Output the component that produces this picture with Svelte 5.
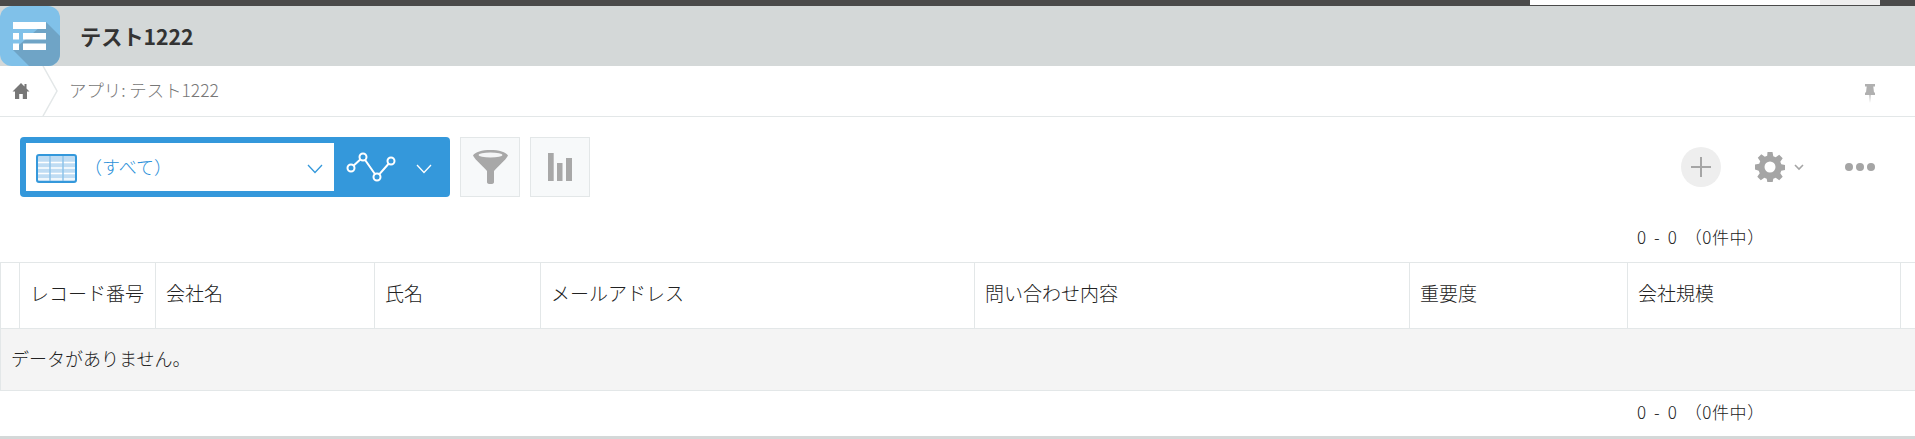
<script>
  const columns = [
    { label: 'レコード番号', width: 136 },
    { label: '会社名', width: 219 },
    { label: '氏名', width: 166 },
    { label: 'メールアドレス', width: 434 },
    { label: '問い合わせ内容', width: 435 },
    { label: '重要度', width: 218 },
    { label: '会社規模', width: 273 }
  ];
</script>

<div class="page">
  <div class="topbar">
    <div class="search"></div>
    <div class="user"></div>
  </div>

  <header class="app-header">
    <div class="app-icon">
      <svg viewBox="0 0 60 60" width="60" height="60">
        <path d="M46 16 60 30V60H29L13 44z" fill="#6fa4c6" />
        <rect x="13" y="16" width="33" height="7" fill="#fff" />
        <rect x="13" y="27" width="6" height="6.500" fill="#fff" />
        <rect x="23" y="27" width="23" height="6.500" fill="#fff" />
        <rect x="13" y="37.500" width="6" height="6.500" fill="#fff" />
        <rect x="23" y="37.500" width="23" height="6.500" fill="#fff" />
      </svg>
    </div>
    <h1>テスト1222</h1>
  </header>

  <nav class="crumbs">
    <a class="home" href="#home" aria-label="home">
      <svg viewBox="0 0 18 18" width="18" height="18">
        <path d="M9 1 0.5 9.500H3V17h4.200v-5h3.600v5H15V9.500h2.500L14.500 6.500V2h-2v2.500z" fill="#777" />
      </svg>
    </a>
    <svg class="chevron" viewBox="0 0 18 50" width="18" height="50">
      <path d="M1 0 15 25 1 50" fill="none" stroke="#e3e7e8" stroke-width="1.500" />
    </svg>
    <span class="crumb-text">アプリ: テスト1222</span>
    <svg class="pin" viewBox="0 0 10 20" width="10" height="20">
      <path d="M0 1h10v2.500H8.300l.7 6h1v2.500H5.600L5 20l-.6-8H0V9.500h1l.7-6H0z" fill="#b0b0b0" />
    </svg>
  </nav>

  <section class="toolbar">
    <div class="view-select">
      <div class="view-box">
        <svg class="table-icon" viewBox="0 0 41 29" width="41" height="29">
          <rect x="1" y="1" width="39" height="27" rx="2" fill="#bfdcf3" stroke="#3498db" stroke-width="2" />
          <path d="M2 8.500h37M2 14h37M2 19.500h37M2 25h37" stroke="#fff" stroke-width="1.600" />
          <path d="M14 2v25M27 2v25" stroke="#8fc3ea" stroke-width="1.500" />
        </svg>
        <span class="view-name">（すべて）</span>
        <svg class="caret" viewBox="0 0 16 10" width="16" height="10">
          <path d="M1 1 8 8.500 15 1" fill="none" stroke="#3498db" stroke-width="1.300" />
        </svg>
      </div>
      <svg class="graph-icon" viewBox="0 0 50 30" width="50" height="30">
        <path d="M5 16 17 5 31 25 45 9" fill="none" stroke="#fff" stroke-width="2" />
        <circle cx="5" cy="16" r="3.500" fill="#3498db" stroke="#fff" stroke-width="2" />
        <circle cx="17" cy="5" r="3.500" fill="#3498db" stroke="#fff" stroke-width="2" />
        <circle cx="31" cy="25" r="3.500" fill="#3498db" stroke="#fff" stroke-width="2" />
        <circle cx="45" cy="9" r="3.500" fill="#3498db" stroke="#fff" stroke-width="2" />
      </svg>
      <svg class="caret light" viewBox="0 0 16 10" width="16" height="10">
        <path d="M1 1 8 8.500 15 1" fill="none" stroke="#fff" stroke-width="1.300" />
      </svg>
    </div>

    <button class="tool" aria-label="filter">
      <svg viewBox="0 0 35 34" width="35" height="34">
        <path d="M0 5.500C2 10 12 18 14 21v11c0 1.500 1 2 3.500 2s3.500-.5 3.500-2V21C23 18 33 10 35 5.500 33 2 26 0 17.500 0S2 2 0 5.500z" fill="#a8a8a8" />
        <ellipse cx="17.500" cy="5" rx="12" ry="2.500" fill="#f4f5f6" />
      </svg>
    </button>
    <button class="tool" aria-label="graph">
      <svg viewBox="0 0 24 28" width="24" height="28">
        <path d="M0 0h5.700v28H0zM9 10h5.500v18H9zM18 5h6v23h-6z" fill="#a8a8a8" />
      </svg>
    </button>

    <div class="actions">
      <button class="add" aria-label="add">
        <svg viewBox="0 0 20 20" width="20" height="20">
          <path d="M10 0v20M0 10h20" stroke="#a5a5a5" stroke-width="2" />
        </svg>
      </button>
      <div class="gear">
        <svg viewBox="0 0 30 30" width="30" height="30">
          <path d="M12.500 0h5l.8 4.200 2.400 1 3.500-2.400 3.500 3.500-2.400 3.500 1 2.400 4.200.8v5l-4.200.8-1 2.400 2.400 3.500-3.500 3.500-3.500-2.400-2.400 1-.8 4.200h-5l-.8-4.200-2.400-1-3.500 2.400-3.500-3.500 2.400-3.500-1-2.400L0 17.500v-5l4.200-.8 1-2.400-2.400-3.500 3.500-3.500 3.500 2.400 2.400-1z M15 9.500a5.500 5.500 0 1 0 0 11 5.500 5.500 0 0 0 0-11z" fill="#a5a5a5" fill-rule="evenodd" />
        </svg>
        <svg viewBox="0 0 10 7" width="10" height="7">
          <path d="M1 1l4 4 4-4" fill="none" stroke="#a5a5a5" stroke-width="1.600" />
        </svg>
      </div>
      <div class="more"><i></i><i></i><i></i></div>
    </div>
  </section>

  <div class="pager">0 - 0 （0件中）</div>

  <table>
    <thead>
      <tr>
        <th class="gutter"></th>
        {#each columns as col}
          <th style="width: {col.width}px">{col.label}</th>
        {/each}
        <th class="tail"></th>
      </tr>
    </thead>
    <tbody>
      <tr>
        <td colspan={columns.length + 2}>データがありません。</td>
      </tr>
    </tbody>
  </table>

  <div class="pager bottom">0 - 0 （0件中）</div>
</div>

<style>
  :global(body) {
    margin: 0;
    background: #fff;
  }

  .page {
    width: 1915px;
    height: 439px;
    overflow: hidden;
    display: flex;
    flex-direction: column;
    border-bottom: 3px solid #d4d8d8;
    box-sizing: border-box;
    font-family: "Noto Sans CJK JP", "Noto Sans", sans-serif;
    font-weight: 300;
    color: #222;
  }

  .topbar {
    height: 6px;
    flex-shrink: 0;
    background: #4a4a4a;
    display: flex;
    justify-content: flex-end;
    padding-right: 35px;
  }

  .search {
    width: 290px;
    height: 5px;
    background: #fff;
  }

  .user {
    width: 60px;
    height: 5px;
    background: #eee;
  }

  .app-header {
    height: 60px;
    flex-shrink: 0;
    background: #d4d8d8;
    display: flex;
    align-items: center;
  }

  .app-icon {
    width: 60px;
    height: 60px;
    border-radius: 12px;
    overflow: hidden;
    background: #80c1e9;
  }

  .app-icon svg {
    display: block;
  }

  h1 {
    margin: 0 0 2px 20px;
    font-size: 21.200px;
    font-weight: 700;
    color: #333;
  }

  .crumbs {
    height: 50px;
    flex-shrink: 0;
    border-bottom: 1px solid #e3e7e8;
    display: flex;
    align-items: center;
  }

  .home {
    display: flex;
    margin-left: 12px;
  }

  .chevron {
    margin-left: 12px;
  }

  .crumb-text {
    margin-left: 9px;
    margin-bottom: 4px;
    font-size: 17.400px;
    color: #777;
  }

  .pin {
    margin-left: auto;
    margin-right: 40px;
    margin-top: 4px;
  }

  .toolbar {
    height: 60px;
    margin-top: 20px;
    padding-left: 20px;
    padding-right: 40px;
    flex-shrink: 0;
    display: flex;
    align-items: center;
    gap: 10px;
  }

  .view-select {
    width: 430px;
    height: 60px;
    box-sizing: border-box;
    background: #3498db;
    border-radius: 4px;
    padding: 6px 0 6px 6px;
    display: flex;
    align-items: center;
  }

  .view-box {
    width: 308px;
    height: 48px;
    background: #fff;
    display: flex;
    align-items: center;
    padding-left: 10px;
    box-sizing: border-box;
  }

  .table-icon {
    margin-top: 2px;
  }

  .view-name {
    margin-left: 7px;
    margin-bottom: 3px;
    font-size: 18px;
    color: #2b90d9;
    flex: 1;
  }

  .caret {
    margin-right: 11px;
    margin-top: 4px;
  }

  .graph-icon {
    margin-left: 12px;
    margin-right: 20px;
  }

  .caret.light {
    margin-right: 0;
  }

  .tool {
    width: 60px;
    height: 60px;
    padding: 0;
    box-sizing: border-box;
    border: 1px solid #e3e7e8;
    background: #f7f9fa;
    display: flex;
    align-items: center;
    justify-content: center;
  }

  .actions {
    margin-left: auto;
    display: flex;
    align-items: center;
  }

  .add {
    width: 40px;
    height: 40px;
    padding: 0;
    border: 0;
    border-radius: 50%;
    background: #eeeeee;
    display: flex;
    align-items: center;
    justify-content: center;
  }

  .gear {
    margin-left: 34px;
    display: flex;
    align-items: center;
    gap: 9px;
  }

  .more {
    margin-left: 41px;
    display: flex;
    gap: 3px;
  }

  .more i {
    width: 8px;
    height: 8px;
    border-radius: 50%;
    background: #a5a5a5;
  }

  .pager {
    height: 65px;
    flex-shrink: 0;
    box-sizing: border-box;
    padding-left: 1637px;
    padding-top: 28px;
    font-size: 17px;
    letter-spacing: 0.6px;
    word-spacing: 3px;
    line-height: 24px;
    white-space: pre;
  }

  .pager.bottom {
    height: 44px;
    padding-top: 9px;
  }

  table {
    width: 1915px;
    table-layout: fixed;
    border-collapse: collapse;
    flex-shrink: 0;
    font-size: 19px;
  }

  th {
    height: 66px;
    padding: 0 0 6px 10px;
    box-sizing: border-box;
    text-align: left;
    font-weight: 300;
    border: 1px solid #e3e7e8;
    white-space: nowrap;
  }

  th.gutter {
    width: 19px;
    padding: 0;
  }

  th.tail {
    padding: 0;
    border-right: 0;
  }

  td {
    height: 62px;
    padding: 0 0 3px 10px;
    box-sizing: border-box;
    font-size: 18px;
    background: #f4f4f4;
    border: 1px solid #e3e7e8;
    border-right: 0;
  }
</style>
